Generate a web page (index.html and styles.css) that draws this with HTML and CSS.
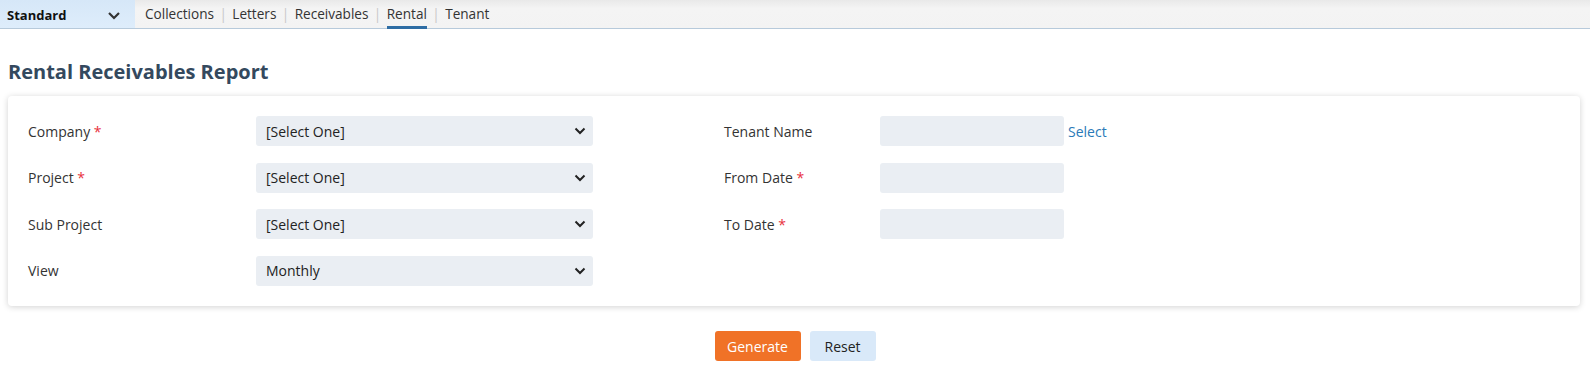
FILE: index.html
```html
<!DOCTYPE html>
<html lang="en">
<head>
    <meta charset="UTF-8">
    <meta name="viewport" content="width=device-width, initial-scale=1.0">
    <title>Rental Receivables Report</title>
    <link rel="stylesheet" href="styles.css">
</head>
<body>

    <div class="topbar">
        <div class="mode">
            <span>Standard</span>
            <svg class="chev" width="14" height="9" viewBox="0 0 14 9"><path d="M2 2l5 5 5-5" fill="none" stroke="#333" stroke-width="2.2"/></svg>
        </div>
        <nav class="menu">
            <a href="#">Collections</a><span class="sep">|</span>
            <a href="#">Letters</a><span class="sep">|</span>
            <a href="#">Receivables</a><span class="sep">|</span>
            <a href="#" class="active">Rental</a><span class="sep">|</span>
            <a href="#">Tenant</a>
        </nav>
    </div>

    <h1 class="title">Rental Receivables Report</h1>

    <div class="card">
        <div class="col left">
            <div class="row">
                <label>Company <span class="req">*</span></label>
                <div class="select">[Select One]<svg width="12" height="8" viewBox="0 0 12 8"><path d="M1.5 1.5l4.5 4.5 4.5-4.5" fill="none" stroke="#222" stroke-width="2"/></svg></div>
            </div>
            <div class="row">
                <label>Project <span class="req">*</span></label>
                <div class="select">[Select One]<svg width="12" height="8" viewBox="0 0 12 8"><path d="M1.5 1.5l4.5 4.5 4.5-4.5" fill="none" stroke="#222" stroke-width="2"/></svg></div>
            </div>
            <div class="row">
                <label>Sub Project</label>
                <div class="select">[Select One]<svg width="12" height="8" viewBox="0 0 12 8"><path d="M1.5 1.5l4.5 4.5 4.5-4.5" fill="none" stroke="#222" stroke-width="2"/></svg></div>
            </div>
            <div class="row">
                <label>View</label>
                <div class="select">Monthly<svg width="12" height="8" viewBox="0 0 12 8"><path d="M1.5 1.5l4.5 4.5 4.5-4.5" fill="none" stroke="#222" stroke-width="2"/></svg></div>
            </div>
        </div>
        <div class="col right">
            <div class="row">
                <label>Tenant Name</label>
                <div class="input"></div>
                <a href="#" class="link">Select</a>
            </div>
            <div class="row">
                <label>From Date <span class="req">*</span></label>
                <div class="input"></div>
            </div>
            <div class="row">
                <label>To Date <span class="req">*</span></label>
                <div class="input"></div>
            </div>
        </div>
    </div>

    <div class="actions">
        <button class="btn primary">Generate</button>
        <button class="btn light">Reset</button>
    </div>

</body>
</html>
```

FILE: styles.css
```css
body {
    font-family: "Open Sans", Arial, sans-serif;
    font-size: 14px;
    color: #333;
    margin: 0;
    background-color: #fff;
}
.topbar {
    display: flex;
    height: 28px;
    background: linear-gradient(#e9e9e9, #f4f4f4 30%, #f3f3f3);
    border-bottom: 1px solid #b7cadb;
}
.mode {
    width: 135px;
    box-sizing: border-box;
    display: flex;
    align-items: center;
    justify-content: space-between;
    padding: 2px 14px 0 7px;
    background: linear-gradient(#d6e7f8, #deedfb);
    font-weight: bold;
    font-size: 13px;
    color: #111;
}
.menu {
    display: flex;
    align-items: stretch;
    padding-left: 10px;
    font-size: 13.6px;
}
.menu a {
    color: #333;
    text-decoration: none;
    display: flex;
    align-items: center;
    border-bottom: 3px solid transparent;
    margin-bottom: -1px;
}
.menu a.active {
    border-bottom-color: #2e6da4;
}
.menu .sep {
    color: #c8c8c8;
    margin: 0 5.4px;
    display: flex;
    align-items: center;
    padding-bottom: 2px;
}
.title {
    font-size: 20px;
    font-weight: bold;
    color: #34495e;
    margin: 29px 0 0 8px;
    height: 38px;
}
.card {
    display: flex;
    margin: 0 10px 0 8px;
    padding: 20px 20px 18px 20px;
    border-radius: 4px;
    box-shadow: 0 1px 6px rgba(0, 0, 0, 0.18);
    height: 172px;
}
.row {
    display: flex;
    align-items: center;
    height: 30px;
    margin-bottom: 16.5px;
}
.left label {
    width: 228px;
}
.right {
    margin-left: 131px;
}
.right label {
    width: 156px;
}
.req {
    color: #e8313c;
}
.select {
    width: 337px;
    height: 30px;
    box-sizing: border-box;
    background-color: #eaeef3;
    border-radius: 3px;
    display: flex;
    align-items: center;
    justify-content: space-between;
    padding: 0 7px 0 10px;
    color: #222;
}
.input {
    width: 184px;
    height: 30px;
    background-color: #eaeef3;
    border-radius: 3px;
}
.link {
    color: #2a7ab8;
    text-decoration: none;
    margin-left: 4px;
}
.actions {
    display: flex;
    justify-content: center;
    gap: 9px;
    margin-top: 25px;
}
.btn {
    font-family: "Open Sans", Arial, sans-serif;
    font-size: 14px;
    height: 30px;
    border: none;
    border-radius: 3px;
    cursor: pointer;
}
.primary {
    width: 86px;
    background-color: #f07227;
    color: #fff;
}
.light {
    width: 66px;
    background-color: #d9e9f9;
    color: #222;
}
```
